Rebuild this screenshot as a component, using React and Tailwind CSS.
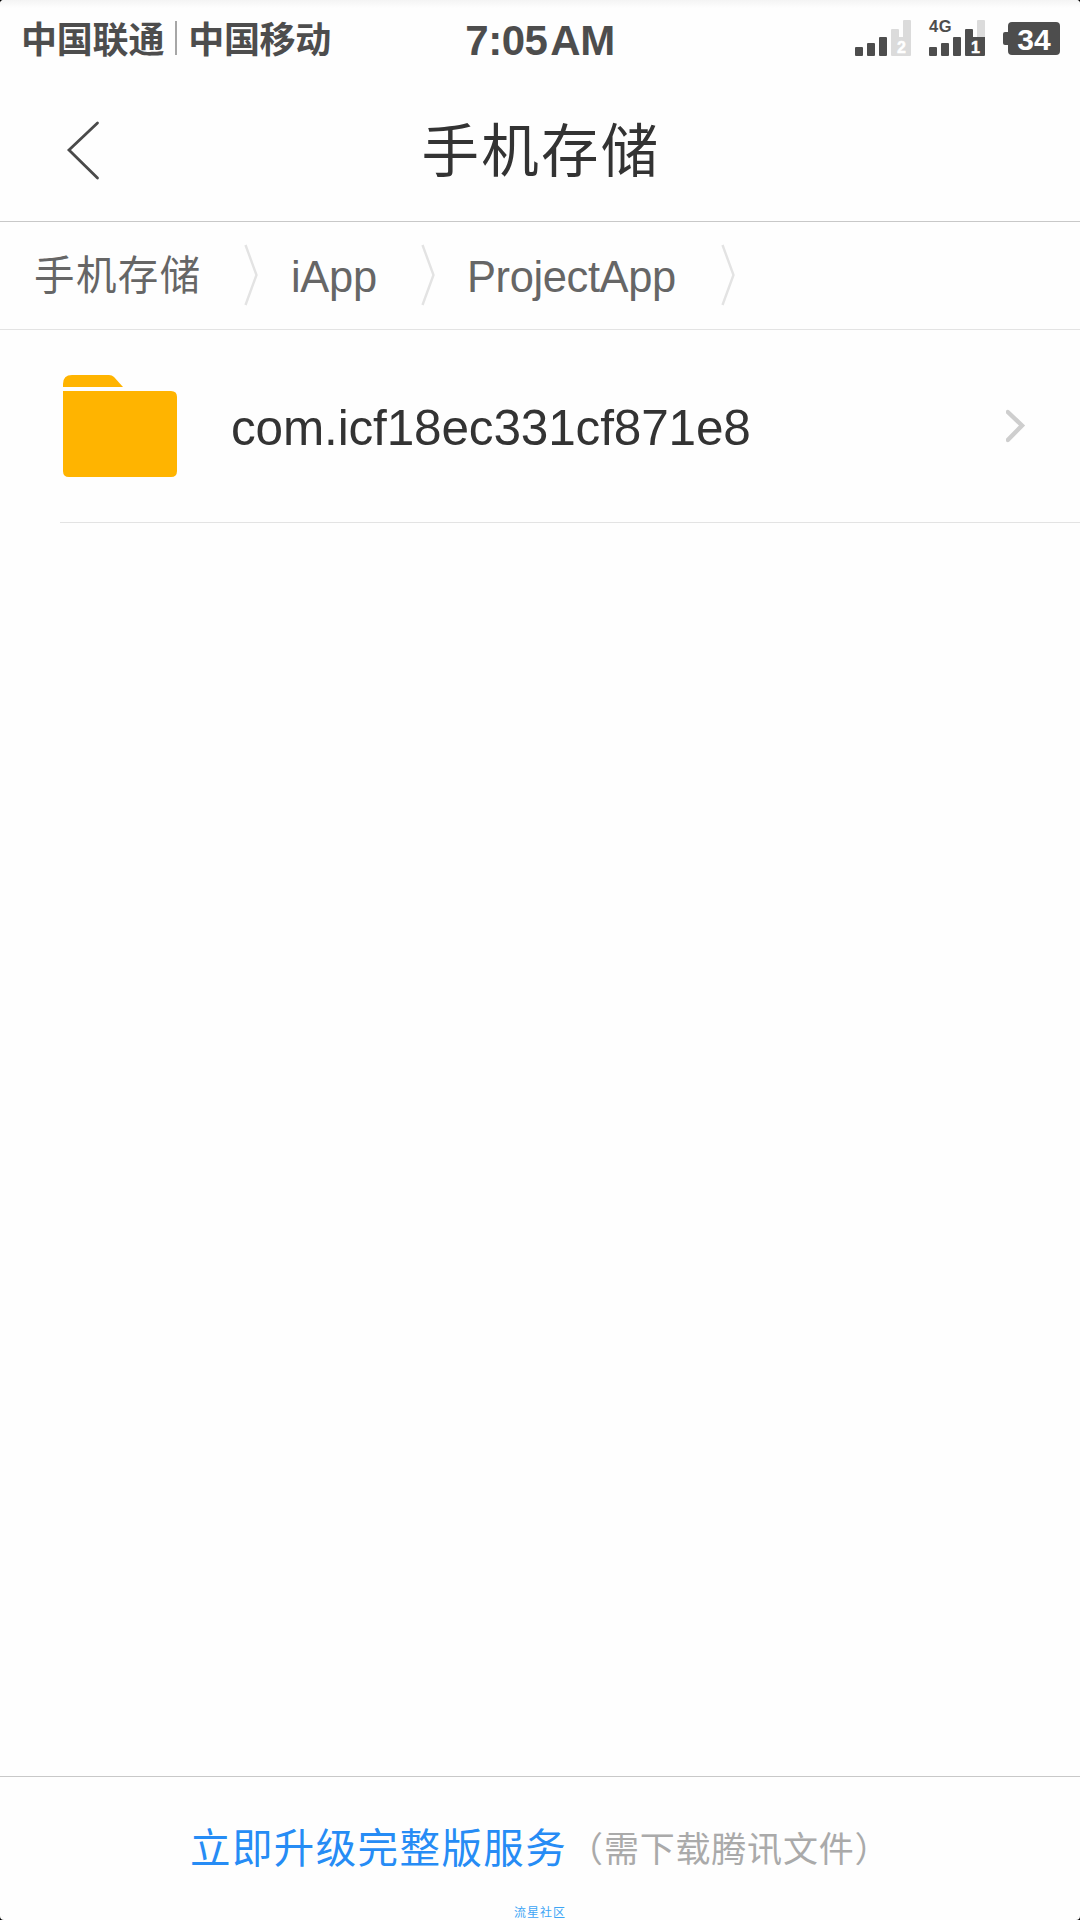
const FONT = "font-['Liberation_Sans','Noto_Sans_CJK_SC',sans-serif]";

function Signal({ label, network, full }) {
  return (
    <svg width="56" height="37" viewBox="0 0 56 37" className="shrink-0 overflow-visible">
      <g fill="#4d4d4d">
        <rect x="0" y="28" width="8" height="9" rx="1" />
        <rect x="12" y="24" width="8" height="13" rx="1" />
        <rect x="24" y="18" width="8" height="19" rx="1" />
      </g>
      <rect x="48" y="1" width="8" height="20" rx="1" fill="#dbdbdb" />
      <path
        d="M37 10h6a1 1 0 0 1 1 1v7h12v18a1 1 0 0 1-1 1H37a1 1 0 0 1-1-1V11a1 1 0 0 1 1-1z"
        fill={full ? "#4d4d4d" : "#dbdbdb"}
      />
      <text x="46.5" y="34" textAnchor="middle" fill="#fff" stroke="#fff" strokeWidth="0.5" className="font-['Liberation_Sans',sans-serif] text-[16px] font-bold">
        {label}
      </text>
      {network && (
        <text x="0" y="12.5" textLength="22.5" fill="#4d4d4d" className="font-['Liberation_Sans',sans-serif] text-[16.5px] font-bold">
          {network}
        </text>
      )}
    </svg>
  );
}

function Battery() {
  return (
    <div className="flex items-center">
      <div className="h-[13px] w-[5px] rounded-l-[2px] bg-[#4d4d4d]" />
      <div className="flex h-[33px] w-[52px] items-center justify-center rounded-[4px] bg-[#4d4d4d] text-[30px] leading-none font-bold text-white">
        <span className="mt-[2px]">34</span>
      </div>
    </div>
  );
}

function StatusBar() {
  return (
    <div className="grid h-20 grid-cols-[1fr_auto_1fr] items-start text-[#4d4d4d]">
      <div className="flex pt-[16px] pl-[21px] text-[36px] leading-[50px] font-bold">
        <span className="tracking-[-0.2px]">中国联通</span>
        <span className="mt-[5px] mr-[11px] ml-[11px] h-[34px] w-[2px] bg-[#a6a6a6]" />
        <span className="tracking-[-0.3px]">中国移动</span>
      </div>
      <div className="pt-[16px] text-[42px] leading-[50px] font-bold tracking-[-0.5px]">
        7:05<span className="ml-[3px]">AM</span>
      </div>
      <div className="flex items-start justify-end pt-[19px] pr-[20px]">
        <Signal label="2" />
        <div className="ml-[18px]">
          <Signal label="1" network="4G" full />
        </div>
        <div className="mt-[3px] ml-[18px]">
          <Battery />
        </div>
      </div>
    </div>
  );
}

function Separator() {
  return (
    <svg width="14" height="62" viewBox="0 0 14 62" fill="none" stroke="#e3e3e3" strokeWidth="2.4" className="shrink-0">
      <path d="M1.5 1L12.5 31L1.5 61" />
    </svg>
  );
}

export default function App() {
  return (
    <div className="h-[1920px] w-[1080px] overflow-hidden bg-black">
      <div className={`${FONT} flex h-full flex-col overflow-hidden rounded-[4px] bg-[#fefefe]`}>
        <header className="h-[222px] border-b border-[#c8c8c8] bg-[linear-gradient(to_bottom,#f4f4f4_0px,#fefefe_8px)]">
          <StatusBar />
          <div className="grid h-[141px] grid-cols-[1fr_auto_1fr] items-start">
            <svg width="34" height="60" viewBox="0 0 34 60" fill="none" stroke="#4a4a4a" strokeWidth="2.8" strokeLinecap="round" className="mt-10 ml-[66px]">
              <path d="M31.5 3L3 30L31.5 58" />
            </svg>
            <h1 className="mt-[30px] ml-[2px] text-[57.5px] leading-[84px] tracking-[2.3px] text-[#333]">手机存储</h1>
          </div>
        </header>

        <nav className="flex h-[108px] items-start border-b border-[#e3e3e3] pt-[22px] pl-[34px] text-[#666]">
          <span className="w-[210px] pt-px text-[40.5px] leading-[62px] tracking-[1.4px]">手机存储</span>
          <Separator />
          <span className="w-[163px] pl-[33px] text-[43.5px] leading-[66px] tracking-[-0.3px]">iApp</span>
          <Separator />
          <span className="w-[286px] pl-[32px] text-[43.5px] leading-[66px] tracking-[-0.4px]">ProjectApp</span>
          <Separator />
        </nav>

        <main className="flex-1">
          <div className="ml-[60px] flex h-[193px] items-start border-b border-[#e3e3e3]">
            <svg width="114" height="102" viewBox="0 0 114 102" fill="#ffb400" className="mt-[45px] ml-[3px]">
              <path d="M0 12V9Q0 0 9 0H46Q49 0 51 2L60 12Z" />
              <path d="M0 16H108Q114 16 114 22V96Q114 102 108 102H6Q0 102 0 96Z" />
            </svg>
            <span className="mt-[68px] ml-[54px] text-[49.5px] leading-[60px] tracking-[-0.15px] text-[#333]">com.icf18ec331cf871e8</span>
            <svg width="20" height="34" viewBox="0 0 20 34" fill="none" stroke="#cecece" strokeWidth="4.4" strokeLinecap="round" className="mt-[79px] mr-[54px] ml-auto">
              <path d="M1.8 3L16 16.5L1.8 31" />
            </svg>
          </div>
        </main>

        <footer className="h-[144px] border-t border-[#c8c8c8]">
          <div className="flex h-[129px] items-start pt-[41px] pl-[190px]">
            <span className="text-[40.5px] leading-[62px] tracking-[1.4px] text-[#268cf5]">立即升级完整版服务</span>
            <span className="ml-px pt-px text-[35px] leading-[62px] tracking-[0.8px] text-[#aaa]">（需下载腾讯文件）</span>
          </div>
          <div className="h-[14px] text-center text-[12px] leading-[14px] tracking-[1px] text-[#3da5f5]">流星社区</div>
        </footer>
      </div>
    </div>
  );
}
